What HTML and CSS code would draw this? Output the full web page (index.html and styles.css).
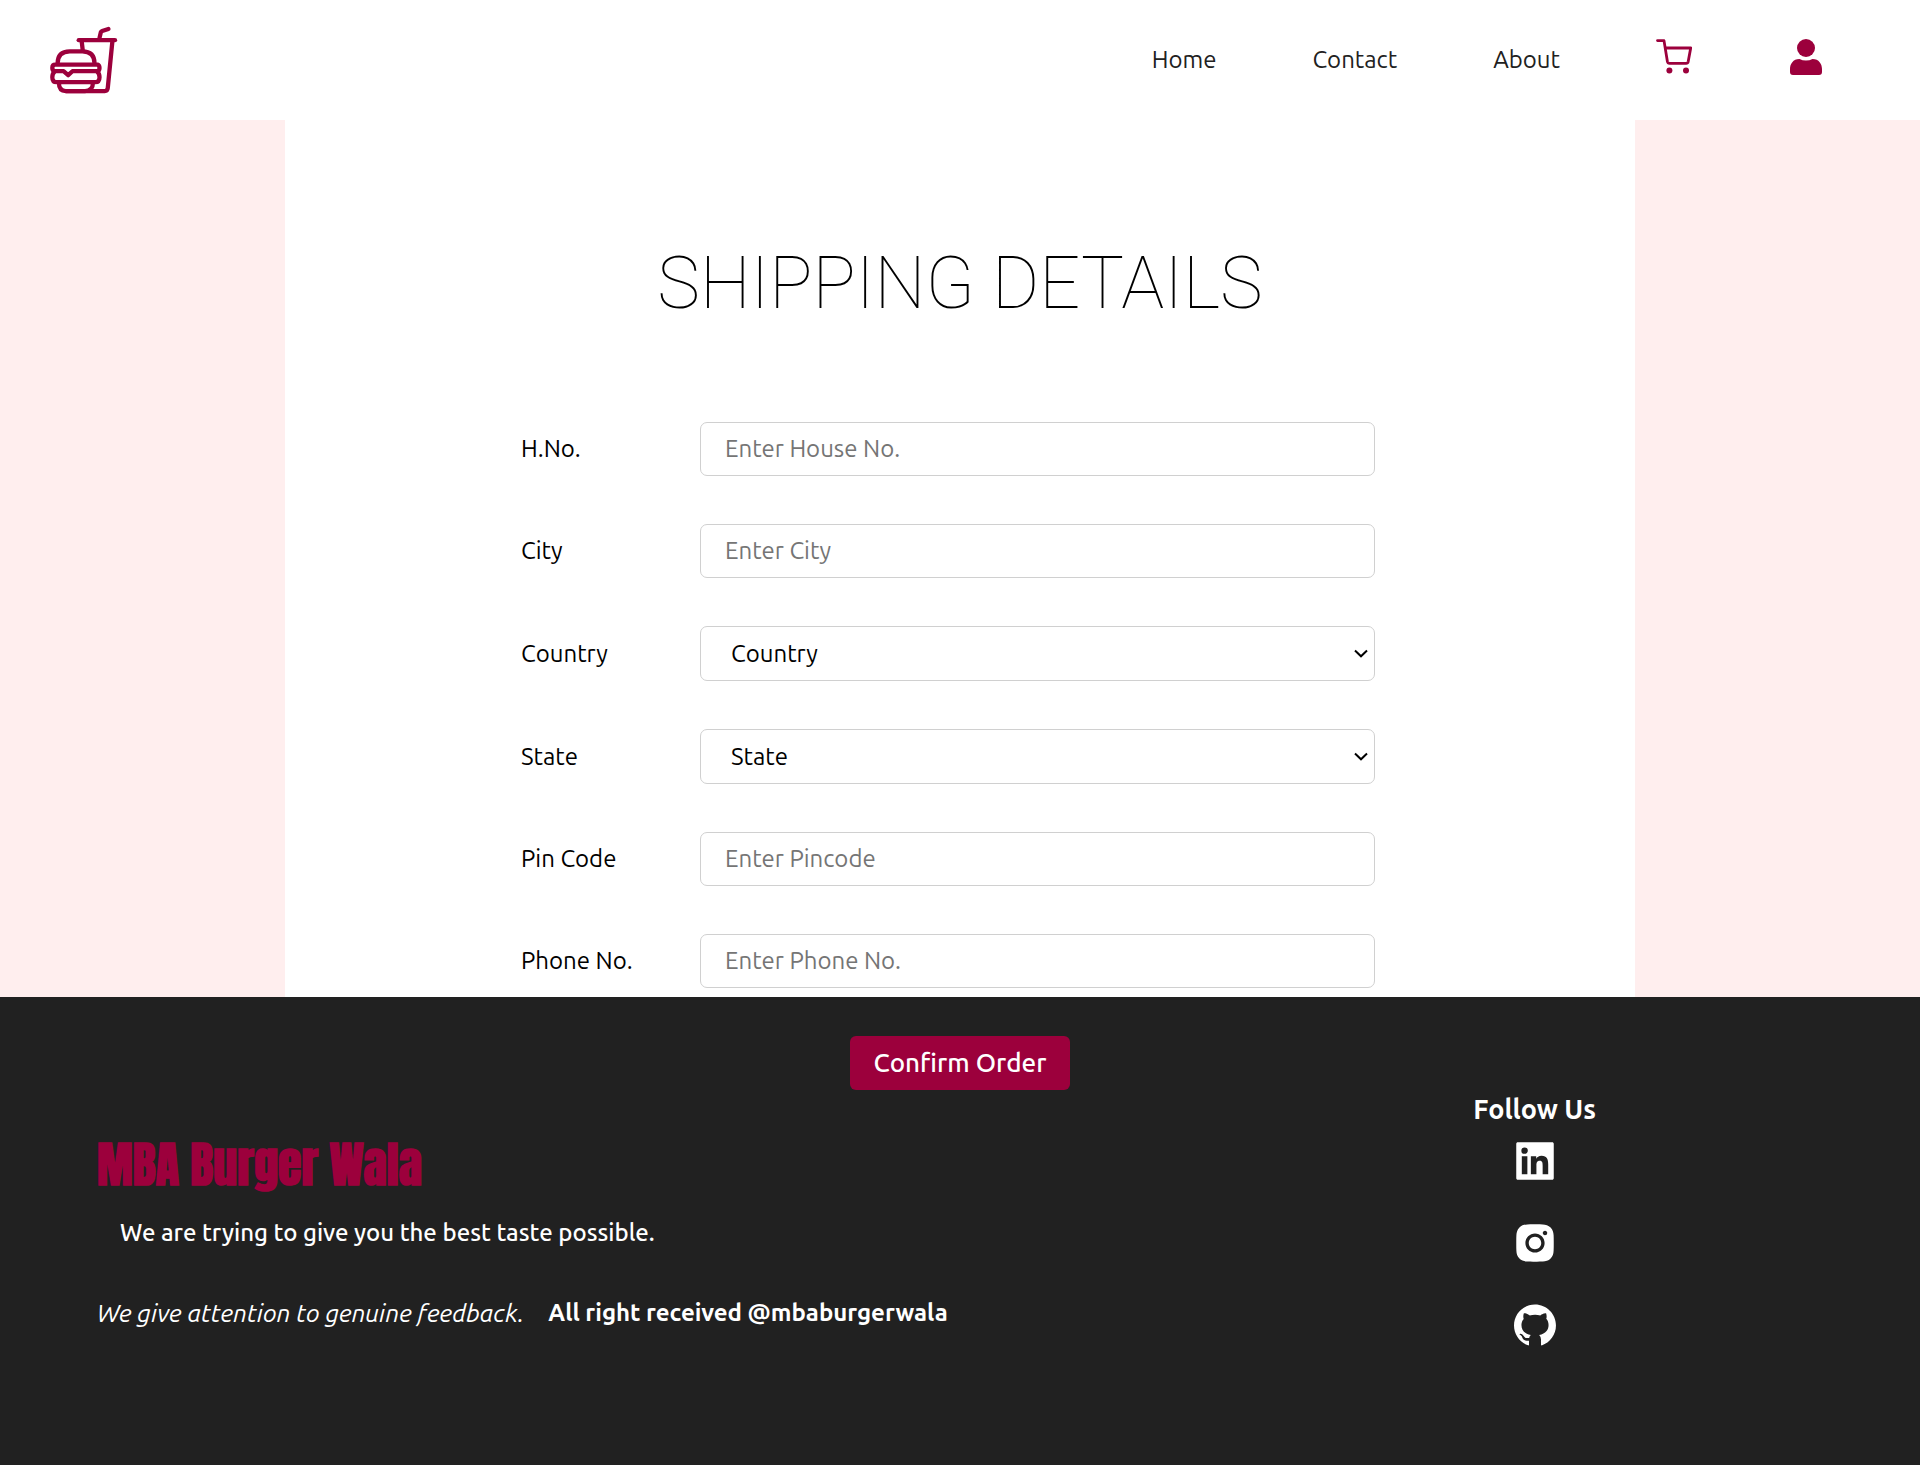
FILE: index.html
```html
<!DOCTYPE html>
<html lang="en">
<head>
<meta charset="utf-8">
<meta name="viewport" content="width=device-width, initial-scale=1">
<title>MBA Burger Wala - Shipping</title>
<link rel="stylesheet" href="styles.css">
</head>
<body>
<header class="site-header">
  <a class="logo" href="#" aria-label="MBA Burger Wala">
    <svg class="logo-icon" viewBox="60 46 206 206" fill="none" stroke="currentColor" stroke-width="13" stroke-linecap="round" stroke-linejoin="round">
      <path d="M210 82L214 65Q215 62 218 61L237 55"/>
      <path d="M147 89H257"/>
      <path d="M156 92L159 118M249 92L235 234Q234 243 226 243H108"/>
      <path d="M83 160Q83 123 120 123H158Q195 123 195 160"/>
      <path d="M76 163H204Q210 165 210 173Q210 183 202 183H128L115 195L101 183H76Q67 183 67 173Q67 163 76 163z"/>
      <path d="M74 184Q67 190 67 201Q67 216 80 216H197Q210 216 210 201Q210 190 203 184"/>
      <path d="M87 219Q87 243 108 243H166Q190 243 190 219"/>
    </svg>
  </a>
  <nav class="nav">
    <a href="#">Home</a>
    <a href="#">Contact</a>
    <a href="#">About</a>
    <a class="nav-icon" href="#" aria-label="Cart">
      <svg viewBox="0 0 36 36" fill="none" stroke="currentColor" stroke-width="2.8" stroke-linecap="round" stroke-linejoin="round">
        <path d="M1.5 1.6H8L11.4 22.5Q11.8 24.3 13.5 24.3H30.2Q31.8 24.3 32.2 22.6L34.7 9H9.4"/>
        <circle cx="13.4" cy="31.4" r="3" fill="currentColor" stroke="none"/>
        <circle cx="30" cy="31.4" r="3" fill="currentColor" stroke="none"/>
      </svg>
    </a>
    <a class="nav-icon" href="#" aria-label="Account">
      <svg viewBox="0 0 36 36" fill="currentColor">
        <circle cx="18" cy="9" r="9"/>
        <path d="M11.5 20Q14.5 21.5 18 21.5T24.5 20C31 20 34 25 34 30V33Q34 36 31 36H5Q2 36 2 33V30C2 25 5 20 11.500 20z"/>
      </svg>
    </a>
  </nav>
</header>

<main class="page">
  <section class="panel">
    <h1 class="title">SHIPPING DETAILS</h1>
    <form class="form">
      <div class="field">
        <label for="house">H.No.</label>
        <input class="control" id="house" type="text" placeholder="Enter House No.">
      </div>
      <div class="field">
        <label for="city">City</label>
        <input class="control" id="city" type="text" placeholder="Enter City">
      </div>
      <div class="field">
        <label for="country">Country</label>
        <select class="control" id="country"><option>Country</option></select>
      </div>
      <div class="field">
        <label for="state">State</label>
        <select class="control" id="state"><option>State</option></select>
      </div>
      <div class="field">
        <label for="pincode">Pin Code</label>
        <input class="control" id="pincode" type="text" placeholder="Enter Pincode">
      </div>
      <div class="field">
        <label for="phone">Phone No.</label>
        <input class="control" id="phone" type="text" placeholder="Enter Phone No.">
      </div>
      <button class="confirm" type="button">Confirm Order</button>
    </form>
  </section>
</main>

<footer class="footer">
  <div class="about">
    <h2 class="brand">MBA Burger Wala</h2>
    <p class="tagline">We are trying to give you the best taste possible.</p>
    <p class="legal"><em>We give attention to genuine feedback.</em><strong>All right received @mbaburgerwala</strong></p>
  </div>
  <aside class="social">
    <h3 class="social-title">Follow Us</h3>
    <a href="#" aria-label="LinkedIn">
      <svg viewBox="0 0 1024 1024" fill="currentColor"><path d="M880 112H144c-17.7 0-32 14.3-32 32v736c0 17.7 14.3 32 32 32h736c17.7 0 32-14.3 32-32V144c0-17.7-14.3-32-32-32zM349.3 793.7H230.6V411.9h118.7v381.8zm-59.3-434a68.8 68.8 0 1 1 68.8-68.8c-.1 38-30.9 68.8-68.8 68.8zm503.7 434H675.1V608c0-44.3-.8-101.2-61.7-101.2-61.7 0-71.2 48.2-71.2 98v188.9H423.7V411.9h113.8v52.2h1.600c15.8-30 54.5-61.7 112.3-61.7 120.2 0 142.3 79.1 142.3 181.9v209.4z"/></svg>
    </a>
    <a href="#" aria-label="Instagram">
      <svg viewBox="0 0 1024 1024" fill="currentColor"><path d="M512 378.7c-73.4 0-133.3 59.9-133.3 133.3S438.6 645.3 512 645.3 645.3 585.4 645.3 512 585.4 378.7 512 378.7zM911.8 512c0-55.2.5-109.9-2.6-165-3.1-64-17.7-120.8-64.5-167.6-46.9-46.9-103.6-61.4-167.6-64.5-55.2-3.1-109.9-2.600-165-2.600-55.2 0-109.9-.5-165 2.600-64 3.1-120.8 17.7-167.6 64.5C132.6 226.3 118.1 283 115 347c-3.1 55.2-2.600 109.9-2.600 165s-.5 109.9 2.600 165c3.1 64 17.7 120.8 64.5 167.6 46.9 46.9 103.6 61.4 167.6 64.5 55.2 3.1 109.9 2.600 165 2.600 55.2 0 109.9.5 165-2.600 64-3.1 120.8-17.7 167.6-64.5 46.9-46.9 61.4-103.6 64.5-167.6 3.2-55.1 2.600-109.8 2.600-165zM512 717.1c-113.5 0-205.1-91.6-205.1-205.1S398.5 306.9 512 306.9 717.1 398.5 717.1 512 625.5 717.1 512 717.1zm213.5-370.7c-26.5 0-47.9-21.4-47.9-47.9s21.4-47.9 47.9-47.9 47.9 21.4 47.9 47.9a47.84 47.84 0 0 1-47.9 47.9z"/></svg>
    </a>
    <a href="#" aria-label="GitHub">
      <svg viewBox="0 0 1024 1024" fill="currentColor"><path d="M511.6 76.3C264.3 76.2 64 276.4 64 523.5 64 718.9 189.3 885 363.8 946c23.5 5.9 19.9-10.8 19.9-22.2v-77.5c-135.7 15.9-141.2-73.9-150.3-88.9C215 726 171.5 718 184.5 703c30.9-15.9 62.4 4 98.9 57.9 26.4 39.1 77.9 32.5 104 26 5.7-23.5 17.9-44.5 34.7-60.8-140.6-25.2-199.2-111-199.2-213 0-49.5 16.3-95 48.3-131.7-20.4-60.5 1.9-112.3 4.9-120 58.1-5.2 118.5 41.6 123.2 45.3 33-8.9 70.7-13.6 112.9-13.6 42.4 0 80.2 4.9 113.5 13.9 11.3-8.6 67.3-48.8 121.3-43.9 2.9 7.7 24.7 58.3 5.5 118 32.4 36.8 48.9 82.7 48.9 132.3 0 102.2-59 188.1-200 212.9a127.5 127.5 0 0 1 38.1 91v112.5c.8 9 0 17.9 15 17.9 177.1-59.7 304.6-227 304.6-424.1 0-247.2-200.4-447.2-447.5-447.2z"/></svg>
    </a>
  </aside>
</footer>
</body>
</html>
```

FILE: styles.css
```css
* {
  box-sizing: border-box;
  margin: 0;
  padding: 0;
}

:root {
  --brand: #9c003c;
  --dark: #212121;
}

body {
  font: 24px/32px Ubuntu, "Noto Sans", sans-serif;
  color: #000;
  background: #fff;
}

a {
  color: inherit;
  text-decoration: none;
}

svg {
  display: block;
}

.site-header {
  display: flex;
  align-items: center;
  justify-content: space-between;
  height: 120px;
  padding: 0 96px 0 50px;
}

.logo,
.nav-icon {
  color: var(--brand);
}

.logo-icon {
  width: 68px;
  height: 68px;
}

.nav {
  display: flex;
  align-items: center;
  gap: 96px;
  color: var(--dark);
}

.nav-icon svg {
  width: 36px;
  height: 36px;
  margin-bottom: 6px;
}

.page {
  background: #ffeeee;
}

.panel {
  max-width: 1350px;
  margin: 0 auto;
  padding-top: 122px;
  background: #fff;
}

.title {
  font: 100 72px/84px Roboto, sans-serif;
  text-align: center;
}

.form {
  display: flex;
  flex-direction: column;
  gap: 48px;
  max-width: 878px;
  margin: 96px auto 0;
}

.field {
  display: grid;
  grid-template-columns: 179px 1fr;
  align-items: center;
  padding-right: 24px;
}

.control {
  width: 100%;
  height: 54px;
  padding: 0 24px 2px;
  font: inherit;
  color: #000;
  background: #fff;
  border: 1px solid #d0d0d0;
  border-radius: 7px;
}

select.control {
  appearance: none;
  height: 55px;
  padding: 0 30px;
  background: #fff url("data:image/svg+xml,%3Csvg xmlns='http://www.w3.org/2000/svg' width='14' height='9' viewBox='0 0 14 9' fill='none' stroke='%23000' stroke-width='2'%3E%3Cpath d='M1 1.500L7 7.300L13 1.500'/%3E%3C/svg%3E") no-repeat right 6px center;
}

.control::placeholder {
  color: #757575;
}

/* The button stays above the footer, which overlaps the end of the form. */
.confirm {
  position: relative;
  z-index: 1;
  align-self: center;
  height: 54px;
  padding: 0 24px;
  font: inherit;
  font-size: 26px;
  font-weight: 500;
  color: #fff;
  background: var(--brand);
  border: 0;
  border-radius: 6px;
}

.footer {
  position: relative;
  display: flex;
  align-items: center;
  justify-content: space-between;
  min-height: 468px;
  margin: -93px 0 2px;
  padding: 0 324px 0 97px;
  color: #fff;
  background: var(--dark);
}

.about {
  display: flex;
  flex-direction: column;
  padding-top: 4px;
}

.brand {
  font: bold 48px/56px Impact, Haettenschweiler, Anton, sans-serif;
  color: var(--brand);
}

.tagline {
  margin: 24px 23px 48px;
  font-weight: 500;
}

.legal {
  display: flex;
  flex-wrap: wrap;
  gap: 0 24px;
}

.legal em {
  font-size: 25px;
}

.social {
  display: flex;
  flex-direction: column;
  align-items: center;
  padding-bottom: 20px;
}

.social-title {
  font-size: 27px;
  line-height: 32px;
  margin-bottom: 12px;
}

.social svg {
  width: 48px;
  height: 48px;
}

.social a + a {
  margin-top: 34px;
}
```
